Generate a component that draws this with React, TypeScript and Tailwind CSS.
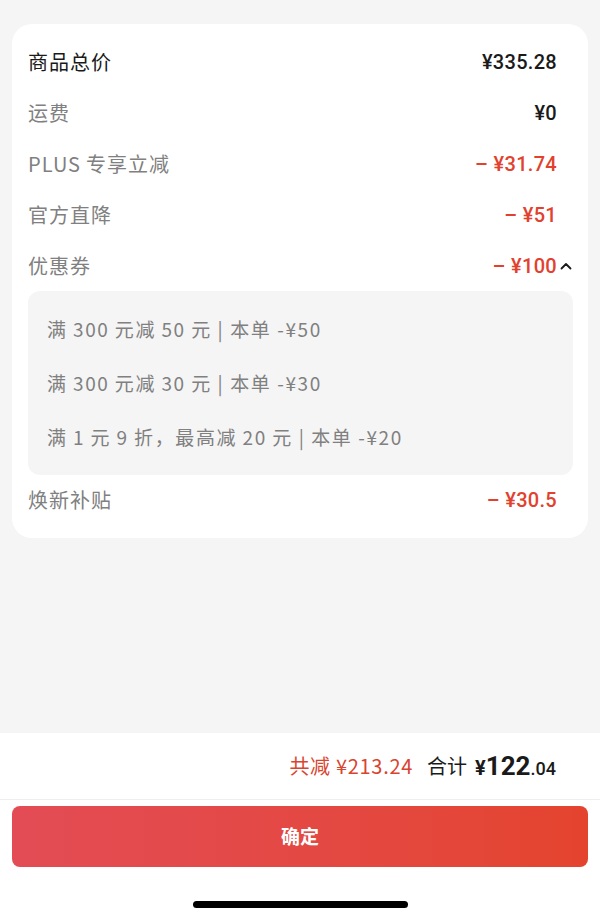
const CJK = "font-['Noto_Sans_CJK_SC','Noto_Sans',sans-serif]";
const NUM = "font-['Roboto','Noto_Sans_CJK_SC',sans-serif]";

type Row = { label: string; value: string; dark?: boolean; red?: boolean; toggle?: boolean };

const ROWS: Row[] = [
  { label: "商品总价", value: "¥335.28", dark: true },
  { label: "运费", value: "¥0" },
  { label: "PLUS\u2009专享立减", value: "–\u2005¥31.74", red: true },
  { label: "官方直降", value: "–\u2005¥51", red: true },
  { label: "优惠券", value: "–\u2005¥100", red: true, toggle: true },
];

const COUPONS = [
  "满\u2009300\u2009元减\u200950\u2009元 | 本单 -¥50",
  "满\u2009300\u2009元减\u200930\u2009元 | 本单 -¥30",
  "满\u20091\u2009元\u20099\u2009折，最高减\u200920\u2009元 | 本单 -¥20",
];

function ChevronUp() {
  return (
    <svg width="14" height="14" viewBox="0 0 14 14" className="ml-[2px]">
      <path d="M2.5 9.5 L7 5 L11.5 9.5" fill="none" stroke="#1a1a1a" strokeWidth="1.8" strokeLinecap="round" strokeLinejoin="round" />
    </svg>
  );
}

function PriceRow({ row }: { row: Row }) {
  return (
    <div className="flex items-center justify-between h-[51px]">
      <span className={`${CJK} text-[20px] tracking-[1px] ${row.dark ? "text-[#1a1a1a]" : "text-[#808080]"}`}>
        {row.label}
      </span>
      <span className="flex items-center">
        <span
          className={`${NUM} text-[20px] font-medium tracking-[0.3px] ${row.red ? "text-[#e2412d]" : "text-[#1a1a1a]"}`}
        >
          {row.value}
        </span>
        <span className="w-[17px] flex items-center">{row.toggle && <ChevronUp />}</span>
      </span>
    </div>
  );
}

export default function App() {
  return (
    <div className="h-[921px] w-[600px] flex flex-col bg-[#f5f5f5]">
      <div className="pt-6 px-3 flex-1">
        <div className="bg-white rounded-[20px] pl-4 pr-[14px] pt-3 pb-[13px]">
          {ROWS.map((r) => (
            <PriceRow key={r.label} row={r} />
          ))}
          <div className="bg-[#f5f5f5] rounded-xl py-[11px] pl-[19px] mr-px">
            {COUPONS.map((c) => (
              <div key={c} className={`${CJK} h-[54px] flex items-center text-[19px] tracking-[1.6px] text-[#808080]`}>
                {c}
              </div>
            ))}
          </div>
          <div className="flex items-center justify-between h-[50px]">
            <span className={`${CJK} text-[20px] tracking-[1px] text-[#808080]`}>焕新补贴</span>
            <span className="flex items-center">
              <span className={`${NUM} text-[20px] font-medium tracking-[0.3px] text-[#e2412d]`}>–{"\u2005"}¥30.5</span>
              <span className="w-[17px]" />
            </span>
          </div>
        </div>
      </div>

      <div className="bg-white h-[188px] flex flex-col">
        <div className="h-[67px] flex items-center justify-end pr-[44px] border-b border-[#eeeeee]">
          <span className={`${CJK} text-[20px] tracking-[0.7px] text-[#d9442f]`}>共减 ¥213.24</span>
          <span className={`${CJK} text-[20px] text-[#1a1a1a] ml-[14px]`}>合计</span>
          <span className={`${NUM} text-[#1a1a1a] font-bold ml-[8px] flex items-baseline`}>
            <span className="text-[20px]">¥</span>
            <span className="text-[26px]">122</span>
            <span className="text-[18px] font-medium">.04</span>
          </span>
        </div>
        <div className="px-3 pt-[6px]">
          <button
            className={`${CJK} w-full h-[61px] rounded-lg bg-gradient-to-r from-[#e34c55] to-[#e4442e] text-white text-[19px] font-bold`}
          >
            确定
          </button>
        </div>
        <div className="flex-1 flex items-end justify-center pb-[13px]">
          <div className="w-[215px] h-[7px] rounded-full bg-black" />
        </div>
      </div>
    </div>
  );
}
